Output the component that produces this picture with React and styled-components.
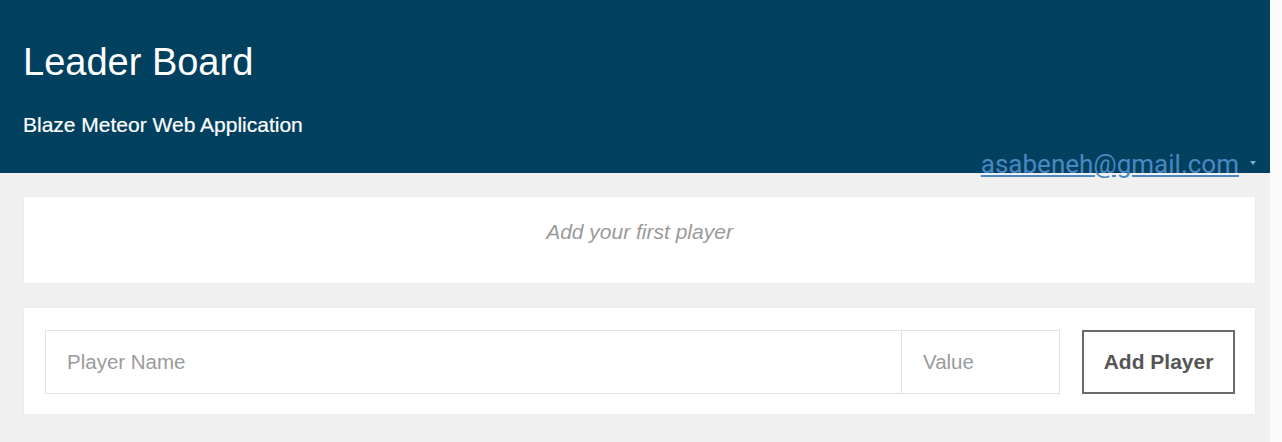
import React from 'react'
import styled, { createGlobalStyle } from 'styled-components'

const GlobalStyle = createGlobalStyle`
  html, body {
    margin: 0;
    padding: 0;
    background: #fafafa;
    font-family: "Liberation Sans", Arial, sans-serif;
  }
`

const Page = styled.div`
  display: grid;
  grid-template-columns: 1270px 1fr;
  min-height: 442px;
`

const Main = styled.div`
  background: #f0f0f0;
  display: flex;
  flex-direction: column;
`

const Gutter = styled.div`
  background: #fafafa;
`

const Header = styled.header`
  background: #01405e;
  height: 173px;
  padding: 0 23px;
  box-sizing: border-box;
  display: flex;
  flex-direction: column;
`

const Title = styled.h1`
  margin: 42px 0 0;
  font-size: 38px;
  font-weight: normal;
  line-height: 40px;
  color: #ffffff;
`

const Subtitle = styled.p`
  margin: 31px 0 0;
  font-size: 21px;
  line-height: 24px;
  color: #ffffff;
  -webkit-text-stroke: 0.2px #ffffff;
`

const UserBar = styled.div`
  display: flex;
  justify-content: flex-end;
  align-items: center;
  gap: 11px;
  margin: -24px 14px 0 0;
  height: 30px;
`

const UserLink = styled.a`
  font-family: Roboto, "Liberation Sans", sans-serif;
  font-size: 26px;
  line-height: 30px;
  color: #4a88c4;
  text-decoration: underline;
  text-underline-offset: 2px;
  cursor: pointer;
`

const Caret = styled.span`
  width: 0;
  height: 0;
  border-left: 3px solid transparent;
  border-right: 3px solid transparent;
  border-top: 4px solid #7aa9d6;
  margin-top: -2px;
`

const Content = styled.div`
  display: flex;
  flex-direction: column;
  gap: 23px;
  padding: 17px 14px 28px 23px;
`

const Card = styled.section`
  background: #ffffff;
  border: 1px solid #ececec;
  box-sizing: border-box;
  min-height: ${p => p.$height || 'auto'};
  padding: ${p => p.$padding || '0'};
  display: flex;
  align-items: center;
  justify-content: ${p => (p.$center ? 'center' : 'flex-start')};
`

const EmptyNote = styled.p`
  margin: 0;
  margin-top: -17px;
  font-size: 21px;
  font-style: italic;
  color: #9a9a9a;
`

const Form = styled.form`
  display: flex;
  align-items: stretch;
  width: 100%;
  height: 64px;
`

const Field = styled.input`
  box-sizing: border-box;
  height: 100%;
  flex: ${p => (p.$grow ? '1' : '0 0 auto')};
  width: ${p => p.$width || 'auto'};
  margin-left: ${p => (p.$joined ? '-1px' : '0')};
  padding: 0 21px;
  border: 1px solid #e3e3e3;
  font-family: "Liberation Sans", Arial, sans-serif;
  font-size: 20.5px;
  color: #444;
  background: #fff;
  outline: none;

  &::placeholder {
    color: #9b9b9b;
  }
`

const Button = styled.button`
  box-sizing: border-box;
  margin-left: 22px;
  width: 153px;
  height: 100%;
  border: 2px solid #6a6a6a;
  background: #fff;
  font-family: "Liberation Sans", Arial, sans-serif;
  font-size: 21px;
  font-weight: bold;
  color: #555;
  cursor: pointer;
`

export default function App() {
  return (
    <>
      <GlobalStyle />
      <Page>
        <Main>
          <Header>
            <Title>Leader Board</Title>
            <Subtitle>Blaze Meteor Web Application</Subtitle>
          </Header>
          <UserBar>
            <UserLink>asabeneh@gmail.com</UserLink>
            <Caret />
          </UserBar>
          <Content>
            <Card $height="88px" $center>
              <EmptyNote>Add your first player</EmptyNote>
            </Card>
            <Card $padding="22px 20px 20px 21px">
              <Form onSubmit={e => e.preventDefault()}>
                <Field $grow placeholder="Player Name" />
                <Field $joined $width="159px" placeholder="Value" />
                <Button type="submit">Add Player</Button>
              </Form>
            </Card>
          </Content>
        </Main>
        <Gutter />
      </Page>
    </>
  )
}
